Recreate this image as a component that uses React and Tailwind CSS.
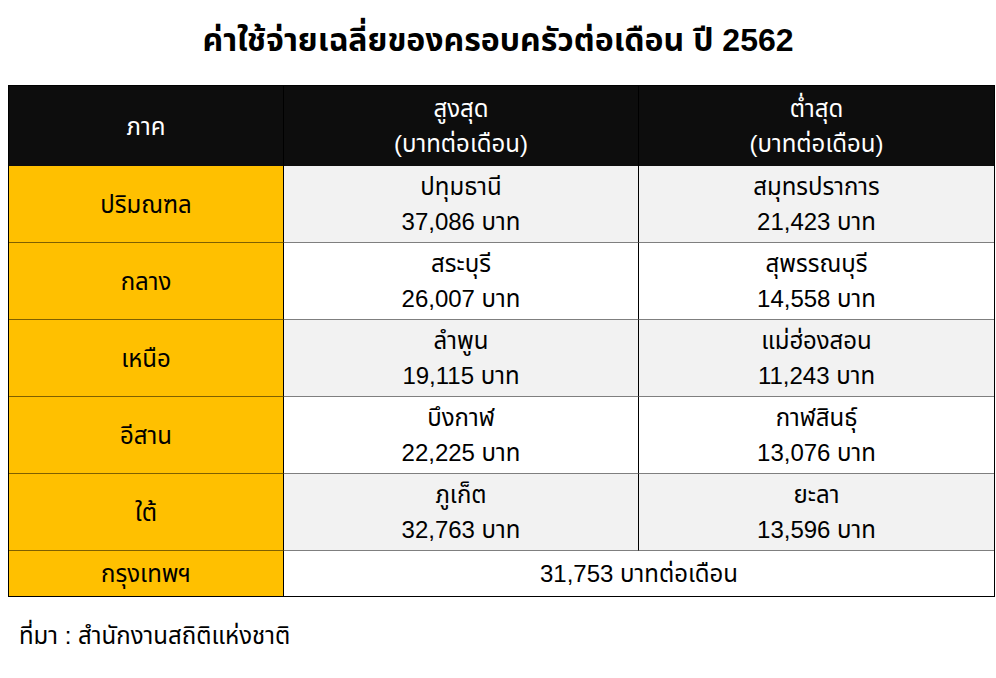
export default function App() {
  const rows = [
    ["ปริมณฑล", "ปทุมธานี", "37,086 บาท", "สมุทรปราการ", "21,423 บาท"],
    ["กลาง", "สระบุรี", "26,007 บาท", "สุพรรณบุรี", "14,558 บาท"],
    ["เหนือ", "ลำพูน", "19,115 บาท", "แม่ฮ่องสอน", "11,243 บาท"],
    ["อีสาน", "บึงกาฬ", "22,225 บาท", "กาฬสินธุ์", "13,076 บาท"],
    ["ใต้", "ภูเก็ต", "32,763 บาท", "ยะลา", "13,596 บาท"],
  ];
  const font = { fontFamily: '"Liberation Sans", "Noto Sans Thai", "Noto Sans", sans-serif' };
  return (
    <div className="w-[996px] h-[678px] bg-white text-black overflow-hidden" style={font}>
      <div className="pt-[21px] h-[85px] text-center text-[32px] font-bold leading-[38px]">
        ค่าใช้จ่ายเฉลี่ยของครอบครัวต่อเดือน ปี 2562
      </div>
      <div className="ml-[8px] w-[987px] border border-black grid grid-cols-[275px_355px_355px] text-[24px] leading-[35px]">
        <div className="h-[80px] bg-[#0d0d0d] text-white flex items-center justify-center border-r border-black">ภาค</div>
        <div className="h-[80px] bg-[#0d0d0d] text-white flex flex-col items-center justify-center border-r border-black">
          <span>สูงสุด</span>
          <span>(บาทต่อเดือน)</span>
        </div>
        <div className="h-[80px] bg-[#0d0d0d] text-white flex flex-col items-center justify-center">
          <span>ต่ำสุด</span>
          <span>(บาทต่อเดือน)</span>
        </div>
        {rows.map((r, i) => {
          const bg = i % 2 === 0 ? "bg-[#f2f2f2]" : "bg-white";
          return [
            <div key={i + "a"} className="h-[77px] bg-[#ffc000] border-r border-black border-b border-b-[#7f6000] flex items-center justify-center">{r[0]}</div>,
            <div key={i + "b"} className={`h-[77px] ${bg} border-r border-black border-b border-b-[#7f7f7f] flex flex-col items-center justify-center`}>
              <span>{r[1]}</span>
              <span>{r[2]}</span>
            </div>,
            <div key={i + "c"} className={`h-[77px] ${bg} border-b border-b-[#7f7f7f] flex flex-col items-center justify-center`}>
              <span>{r[3]}</span>
              <span>{r[4]}</span>
            </div>,
          ];
        })}
        <div className="h-[45px] bg-[#ffc000] border-r border-black flex items-center justify-center">กรุงเทพฯ</div>
        <div className="h-[45px] col-span-2 bg-white flex items-center justify-center">31,753 บาทต่อเดือน</div>
      </div>
      <div className="mt-[23px] ml-[19px] text-[24px] leading-[32px]">ที่มา : สำนักงานสถิติแห่งชาติ</div>
    </div>
  );
}
